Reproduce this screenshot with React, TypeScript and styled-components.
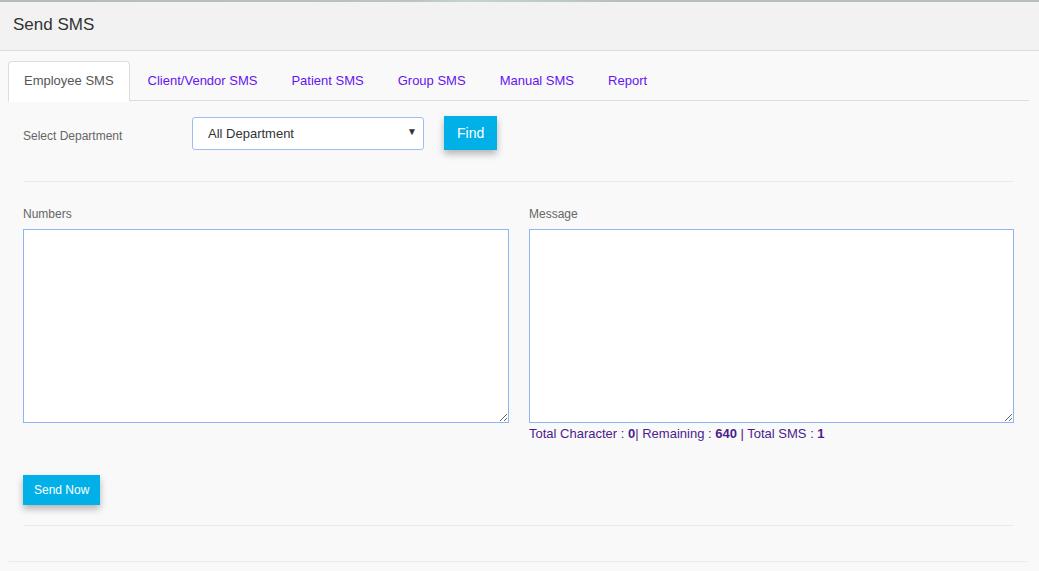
import React from "react";
import styled, { createGlobalStyle } from "styled-components";

const Global = createGlobalStyle`
  html, body { margin: 0; padding: 0; background: #f9f9f9; }
  body { font-family: "Liberation Sans", Arial, sans-serif; color: #333; }
  * { box-sizing: border-box; }
`;

const Page = styled.div`
  width: 1039px;
  height: 571px;
  overflow: hidden;
  background: #f9f9f9;
`;

const TopStrip = styled.div`
  height: 2px;
  background: linear-gradient(90deg, #b4bbbc 0%, #bcc4c2 40%, #c6d3cc 45%, #b8c0bf 60%, #b7bebf 100%);
`;

const Header = styled.div`
  height: 49px;
  background: #f2f2f2;
  border-bottom: 1px solid #dcdcdc;
  display: flex;
  align-items: center;
  padding: 0 13px 2px;
  font-size: 17px;
  color: #333;
`;

const Card = styled.div`
  margin: 10px 10px 0 8px;
  background: #f9f9f9;
  box-shadow: 0 2px 1px -1px #ececec;
  padding-bottom: 35px;
`;

const Tabs = styled.div`
  display: flex;
  height: 40px;
  border-bottom: 1px solid #dddddd;
`;

const Tab = styled.div<{ $active?: boolean }>`
  height: 41px;
  padding: 0 15px 2px;
  margin-right: 2px;
  margin-bottom: -1px;
  display: flex;
  align-items: center;
  font-size: 13px;
  border: 1px solid ${(p) => (p.$active ? "#dddddd" : "transparent")};
  border-bottom-color: ${(p) => (p.$active ? "#ffffff" : "transparent")};
  border-radius: 4px 4px 0 0;
  background: ${(p) => (p.$active ? "#ffffff" : "transparent")};
  color: ${(p) => (p.$active ? "#555555" : "#6514f0")};
`;

const Content = styled.div`
  padding: 0 15px;
`;

const FilterRow = styled.div`
  display: flex;
  align-items: center;
  padding-top: 15px;
  height: 50px;
`;

const FieldLabel = styled.div`
  width: 169px;
  font-size: 12px;
  color: #666;
  padding-top: 4px;
`;

const SelectWrap = styled.div`
  position: relative;
  width: 232px;
  height: 33px;
`;

const Select = styled.select`
  appearance: none;
  -webkit-appearance: none;
  width: 100%;
  height: 100%;
  border: 1px solid #9fbdf0;
  border-radius: 3px;
  background: #fff;
  font-family: "Liberation Sans", Arial, sans-serif;
  font-size: 13px;
  color: #333;
  padding: 0 0 0 15px;
  outline: none;
`;

const Arrow = styled.span`
  position: absolute;
  right: 7px;
  top: 9px;
  font-size: 10px;
  color: #333;
  pointer-events: none;
`;

const PrimaryButton = styled.button<{ $small?: boolean }>`
  border: none;
  background: #00b0e6;
  color: #fff;
  font-family: "Liberation Sans", Arial, sans-serif;
  font-size: ${(p) => (p.$small ? "12px" : "14px")};
  height: ${(p) => (p.$small ? "30px" : "34px")};
  padding: ${(p) => (p.$small ? "0 11px" : "0 13px")};
  box-shadow: 0 4px 7px rgba(0, 0, 0, 0.28);
  cursor: pointer;
`;

const FindButton = styled(PrimaryButton)`
  margin-left: 20px;
  margin-top: -1px;
`;

const Rule = styled.hr`
  border: none;
  border-top: 1px solid #ebebeb;
  margin: 0;
`;

const FirstRule = styled(Rule)`
  margin-top: 30px;
`;

const Columns = styled.div`
  display: grid;
  grid-template-columns: 486px 485px;
  gap: 20px;
  padding-top: 25px;
`;

const Column = styled.div`
  display: flex;
  flex-direction: column;
`;

const SmallLabel = styled.div`
  font-size: 12px;
  color: #666;
  height: 22px;
`;

const TextArea = styled.textarea`
  width: 100%;
  height: 194px;
  border: 1px solid #8db6f5;
  background: #fff;
  resize: vertical;
  outline: none;
  font-family: "Liberation Sans", Arial, sans-serif;
`;

const Stats = styled.div`
  font-size: 13px;
  color: #4b1c8e;
  margin-top: 3px;
  b { font-weight: bold; }
`;

const SendRow = styled.div`
  padding-top: 34px;
  padding-bottom: 20px;
`;

const tabs = ["Employee SMS", "Client/Vendor SMS", "Patient SMS", "Group SMS", "Manual SMS", "Report"];

export default function App() {
  return (
    <Page>
      <Global />
      <TopStrip />
      <Header>Send SMS</Header>
      <Card>
        <Tabs>
          {tabs.map((t, i) => (
            <Tab key={t} $active={i === 0}>
              {t}
            </Tab>
          ))}
        </Tabs>
        <Content>
          <FilterRow>
            <FieldLabel>Select Department</FieldLabel>
            <SelectWrap>
              <Select defaultValue="all">
                <option value="all">All Department</option>
              </Select>
              <Arrow>▼</Arrow>
            </SelectWrap>
            <FindButton>Find</FindButton>
          </FilterRow>
          <FirstRule />
          <Columns>
            <Column>
              <SmallLabel>Numbers</SmallLabel>
              <TextArea />
            </Column>
            <Column>
              <SmallLabel>Message</SmallLabel>
              <TextArea />
              <Stats>
                Total Character : <b>0</b>| Remaining : <b>640</b> | Total SMS : <b>1</b>
              </Stats>
            </Column>
          </Columns>
          <SendRow>
            <PrimaryButton $small>Send Now</PrimaryButton>
          </SendRow>
          <Rule />
        </Content>
      </Card>
    </Page>
  );
}
